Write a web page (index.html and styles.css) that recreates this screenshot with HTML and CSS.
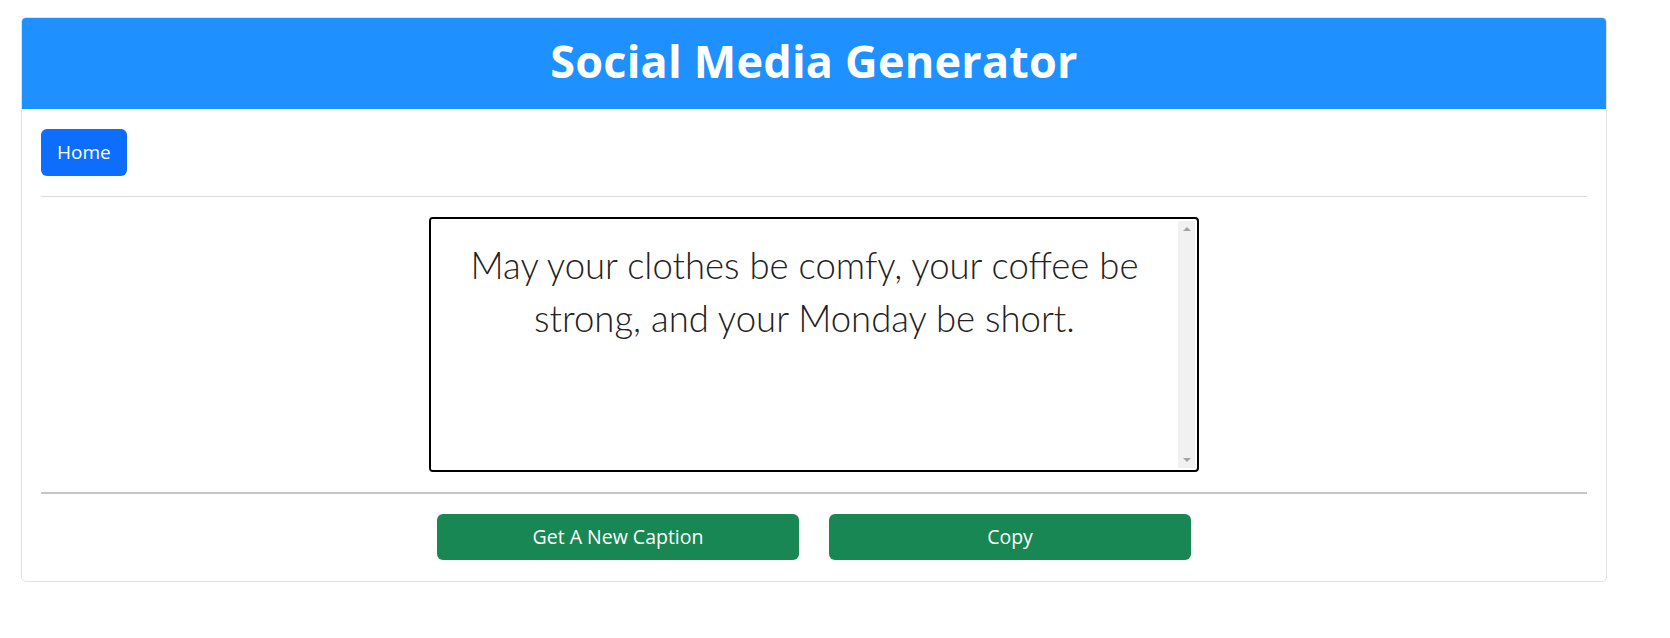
FILE: index.html
```html
<!DOCTYPE html>
<html lang="en">
<head>
  <meta charset="UTF-8" />
  <meta name="viewport" content="width=device-width, initial-scale=1.0"/>
  <title>Social Media Generator</title>
  <link rel="stylesheet" href="styles.css">
</head>
<body>

<div class="card">
  <header class="card-header">
    <h1>Social Media Generator</h1>
  </header>

  <div class="card-body">
    <nav>
      <a href="#" class="btn btn-primary">Home</a>
    </nav>
    <hr class="rule">

    <div class="caption-box">
      <textarea id="caption" class="caption" readonly>May your clothes be comfy, your coffee be strong, and your Monday be short.</textarea>
      <div class="scrollbar">
        <span class="arrow arrow-up"></span>
        <span class="arrow arrow-down"></span>
      </div>
    </div>

    <hr class="rule rule-dark">

    <div class="actions">
      <button class="btn btn-success" onclick="newCaption()">Get A New Caption</button>
      <button class="btn btn-success" onclick="copyCaption()">Copy</button>
    </div>
  </div>
</div>

<script>
  const captions = [
    "May your clothes be comfy, your coffee be strong, and your Monday be short.",
    "Good vibes only.",
    "Weekend mode: on.",
    "Less perfection, more authenticity."
  ];

  function newCaption() {
    const box = document.getElementById("caption");
    let next = box.value;
    while (next === box.value) {
      next = captions[Math.floor(Math.random() * captions.length)];
    }
    box.value = next;
  }

  function copyCaption() {
    const box = document.getElementById("caption");
    box.select();
    document.execCommand("copy");
  }
</script>

</body>
</html>
```

FILE: styles.css
```css
body {
  margin: 0;
  padding: 17px 0 0 21px;
  background: #fff;
  font-family: "Open Sans", "Noto Sans", sans-serif;
  color: #212529;
}
.card {
  box-sizing: border-box;
  width: 1586px;
  border: 1px solid #e2e2e2;
  border-radius: 5px;
  overflow: hidden;
}
.card-header {
  box-sizing: border-box;
  height: 91px;
  padding-bottom: 6px;
  background: #1e90ff;
  display: flex;
  align-items: center;
  justify-content: center;
}
.card-header h1 {
  margin: 0;
  color: #fff;
  font-size: 45px;
  font-weight: 700;
  letter-spacing: 0.2px;
}
.card-body {
  padding: 20px 19px 21px;
}
.btn {
  display: inline-block;
  box-sizing: border-box;
  border: 1px solid transparent;
  border-radius: 6px;
  padding: 8px 16px;
  font-family: "Open Sans", "Noto Sans", sans-serif;
  font-size: 19.5px;
  line-height: 28px;
  color: #fff;
  text-decoration: none;
  text-align: center;
  cursor: pointer;
}
.btn-primary {
  background: #0d6efd;
  height: 47px;
  padding: 8px 15px;
  font-size: 19px;
}
.btn-success {
  background: #198754;
  width: 362px;
  height: 46px;
}
.rule {
  margin: 20px 0;
  border: 0;
  border-top: 1px solid #dadada;
}
.rule-dark {
  margin: 20px 0 20px;
  border-top: 2px solid #c6c6c6;
}
.caption-box {
  display: flex;
  box-sizing: border-box;
  width: 770px;
  height: 255px;
  margin: 0 auto;
  border: 2px solid #000;
  border-radius: 4px;
  overflow: hidden;
  background: #fff;
}
.caption {
  flex: 1;
  box-sizing: border-box;
  padding: 20px 16px;
  border: 0;
  overflow: hidden;
  resize: none;
  font-family: Lato, "Open Sans", sans-serif;
  font-weight: 300;
  font-size: 36.5px;
  line-height: 53px;
  text-align: center;
  color: #222;
  outline: none;
}
.scrollbar {
  width: 17px;
  margin: 2px 2px 2px 0;
  background: #f1f1f1;
  display: flex;
  flex-direction: column;
  justify-content: space-between;
  align-items: center;
  padding: 6px 0;
}
.arrow {
  width: 0;
  height: 0;
  border-left: 4px solid transparent;
  border-right: 4px solid transparent;
}
.arrow-up {
  border-bottom: 4px solid #a3a3a3;
}
.arrow-down {
  border-top: 4px solid #a3a3a3;
}
.actions {
  display: flex;
  justify-content: center;
  gap: 30px;
}
```
